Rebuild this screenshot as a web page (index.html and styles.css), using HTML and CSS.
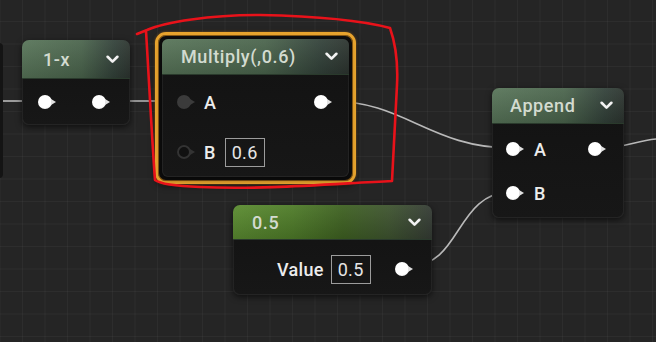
FILE: index.html
```html
<!DOCTYPE html>
<html>
<head>
<meta charset="utf-8">
<link rel="stylesheet" href="styles.css">
</head>
<body>
<div class="canvas">
  <svg class="wires" width="656" height="342" viewBox="0 0 656 342">
    <path d="M0,101 L30,101"/>
    <path d="M105,101 L170,101"/>
    <path d="M330,101 C405,101 430,148 512,148"/>
    <path d="M600,148 C625,148 635,141 656,139"/>
    <path d="M410,266 C462,266 455,192 512,192"/>
  </svg>

  <div class="edge-node"></div>

  <div class="node n1x">
    <div class="hdr"><span class="title">1-x</span><svg class="chev" viewBox="0 0 12 8"><polyline points="1.5,1.5 6,6 10.5,1.5"/></svg></div>
    <div class="bd">
      <div class="row spread"><span class="pin"></span><span class="pin"></span></div>
    </div>
  </div>

  <div class="sel">
    <div class="node nmul">
      <div class="hdr"><span class="title">Multiply(,0.6)</span><svg class="chev" viewBox="0 0 12 8"><polyline points="1.5,1.5 6,6 10.5,1.5"/></svg></div>
      <div class="bd">
        <div class="row spread">
          <span class="in"><span class="pin dim"></span><span class="lbl">A</span></span>
          <span class="pin"></span>
        </div>
        <div class="row">
          <span class="in"><span class="pin ring"></span><span class="lbl">B</span><span class="box">0.6</span></span>
        </div>
      </div>
    </div>
  </div>

  <div class="node napp">
    <div class="hdr"><span class="title">Append</span><svg class="chev" viewBox="0 0 12 8"><polyline points="1.5,1.5 6,6 10.5,1.5"/></svg></div>
    <div class="bd">
      <div class="row spread">
        <span class="in"><span class="pin"></span><span class="lbl">A</span></span>
        <span class="pin"></span>
      </div>
      <div class="row">
        <span class="in"><span class="pin"></span><span class="lbl">B</span></span>
      </div>
    </div>
  </div>

  <div class="node nval">
    <div class="hdr"><span class="title">0.5</span><svg class="chev" viewBox="0 0 12 8"><polyline points="1.5,1.5 6,6 10.5,1.5"/></svg></div>
    <div class="bd">
      <div class="row">
        <span class="lbl">Value</span><span class="box">0.5</span><span class="pin"></span>
      </div>
    </div>
  </div>

  <svg class="annot" width="656" height="342" viewBox="0 0 656 342">
    <path d="M137,34 L147,30 C165,22 210,15 260,15 C310,16 360,20 390,28 C396,45 398,65 397,85 L392,181 C330,184 260,190 200,187 C175,186 160,184 155,180 C152,140 149,80 146,31"/>
  </svg>
</div>
</body>
</html>
```

FILE: styles.css
```css
html, body {
  margin: 0;
  padding: 0;
}
body {
  width: 656px;
  height: 342px;
  overflow: hidden;
  font-family: Roboto, "Liberation Sans", sans-serif;
}
.canvas {
  position: relative;
  width: 656px;
  height: 342px;
  background-color: #252525;
  background-image:
    linear-gradient(to right, rgba(255,255,255,0.035) 1px, transparent 1px),
    linear-gradient(to bottom, rgba(255,255,255,0.035) 1px, transparent 1px);
  background-size: 22.5px 22.5px;
  background-position: 22px 21px;
  overflow: hidden;
}
.wires, .annot {
  position: absolute;
  left: 0;
  top: 0;
}
.wires path {
  fill: none;
  stroke: #b9b9b9;
  stroke-width: 1.6;
}
.annot path {
  fill: none;
  stroke: #e8121a;
  stroke-width: 2.6;
  stroke-linejoin: round;
  stroke-linecap: round;
}
.edge-node {
  position: absolute;
  left: -6px;
  top: 43px;
  width: 9px;
  height: 135px;
  background: #141414;
  border-radius: 4px;
}
.node {
  position: absolute;
  display: flex;
  flex-direction: column;
  background: linear-gradient(180deg, #121212, #171717);
  border-radius: 7px;
  box-shadow: 0 2px 6px rgba(0,0,0,0.6), inset 0 0 0 1px rgba(255,255,255,0.06);
  overflow: hidden;
}
.hdr {
  display: flex;
  align-items: center;
  justify-content: space-between;
  padding: 0 11px 0 19px;
  height: 36px;
  flex: none;
  background:
    linear-gradient(180deg, rgba(255,255,255,0.06), rgba(0,0,0,0.15)),
    linear-gradient(90deg, #587559 0%, #4b654d 55%, #33423a 85%, #2d3530 100%);
  border-bottom: 1px solid #2a3a2c;
}
.title {
  color: #d3dbd0;
  font-size: 18px;
  font-weight: 500;
  letter-spacing: 0.6px;
}
.chev {
  width: 13px;
  height: 9px;
}
.chev polyline {
  fill: none;
  stroke: #f2f2f2;
  stroke-width: 2.4;
  stroke-linecap: round;
  stroke-linejoin: round;
}
.bd {
  flex: 1;
  display: flex;
  flex-direction: column;
}
.row {
  display: flex;
  align-items: center;
}
.spread {
  justify-content: space-between;
}
.in {
  display: flex;
  align-items: center;
}
.pin {
  position: relative;
  display: inline-block;
  width: 14px;
  height: 14px;
  margin-right: 4px;
  border-radius: 50%;
  background: radial-gradient(circle at 45% 40%, #ffffff 60%, #d4d4d4 100%);
  flex: none;
}
.pin::after {
  content: "";
  position: absolute;
  left: 13px;
  top: 3.5px;
  border-left: 5px solid #e2e2e2;
  border-top: 3.5px solid transparent;
  border-bottom: 3.5px solid transparent;
}
.pin.dim {
  background: #3b3b3b;
}
.pin.dim::after {
  border-left-color: #3b3b3b;
}
.pin.ring {
  background: #111;
  box-shadow: inset 0 0 0 2px #333;
}
.pin.ring::after {
  border-left-color: #333;
}
.lbl {
  color: #ececec;
  font-size: 18px;
  font-weight: 500;
  letter-spacing: 0.3px;
}
.box {
  display: inline-flex;
  align-items: center;
  height: 27px;
  padding: 0 6px;
  border: 1.5px solid #9c9c9c;
  color: #e6e6e6;
  font-size: 18px;
  letter-spacing: 0.3px;
}

/* 1-x */
.n1x {
  left: 22px;
  top: 40px;
  width: 108px;
  height: 85px;
}
.n1x .hdr { height: 38px; padding-left: 21px; }
.n1x .bd { padding: 0 20px 0 16px; }
.n1x .row { height: 46px; }

/* Multiply */
.sel {
  position: absolute;
  left: 155px;
  top: 32px;
  width: 201px;
  height: 152px;
  box-sizing: border-box;
  border: 3px solid #e8a42e;
  border-radius: 11px;
  background: #0e0e0e;
  box-shadow: inset 0 0 0 1px #8a5a14, 0 0 3px rgba(230,150,40,0.5), 0 2px 6px rgba(0,0,0,0.6);
}
.sel .nmul {
  left: 4px;
  top: 4px;
  width: 187px;
  height: 138px;
  border-radius: 6px;
}
.nmul .hdr { height: 35px; }
.nmul .bd { padding: 8px 17px 0 15px; gap: 12px; }
.nmul .row { height: 38px; }
.nmul .lbl { margin-left: 9px; }
.nmul .box { margin-left: 9px; }

/* Append */
.napp {
  left: 492px;
  top: 88px;
  width: 132px;
  height: 130px;
}
.napp .hdr { height: 35px; padding-left: 18px; }
.napp .bd { padding: 7px 18px 0 14px; gap: 8px; }
.napp .row { height: 36px; }
.napp .lbl { margin-left: 10px; }

/* Value */
.nval {
  left: 233px;
  top: 205px;
  width: 199px;
  height: 90px;
}
.nval .hdr {
  height: 34px;
  background:
    linear-gradient(180deg, rgba(255,255,255,0.05), rgba(0,0,0,0.15)),
    linear-gradient(90deg, #5b8c31 0%, #4f7c29 30%, #3f6222 55%, #3f5530 78%, #353c35 100%);
}
.nval .bd { padding: 0 0 0 44px; }
.nval .row { height: 58px; }
.nval .box { margin-left: 7px; }
.nval .pin { margin-left: 24px; }
```
